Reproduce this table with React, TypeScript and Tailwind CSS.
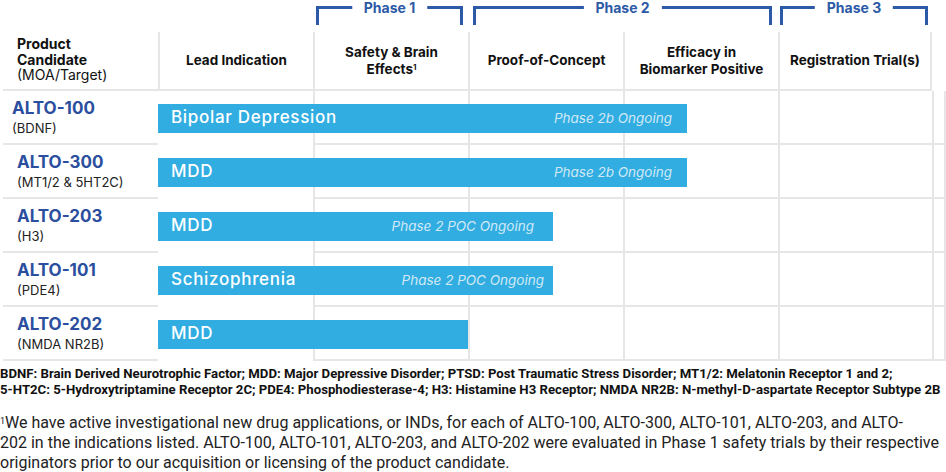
const phases = [
  { label: "Phase 1", cls: "ml-[316px] w-[147px]" },
  { label: "Phase 2", cls: "ml-[10px] w-[299px]" },
  { label: "Phase 3", cls: "ml-[8px] w-[148px]" },
];

const rows = [
  {
    name: "ALTO-100",
    target: "(BDNF)",
    pad: "pl-[9px]",
    bar: "Bipolar Depression",
    status: "Phase 2b Ongoing",
    width: "w-[529px]",
    statusPad: "pr-[15px]",
  },
  {
    name: "ALTO-300",
    target: "(MT1/2 & 5HT2C)",
    pad: "pl-[14px]",
    bar: "MDD",
    status: "Phase 2b Ongoing",
    width: "w-[529px]",
    statusPad: "pr-[15px]",
  },
  {
    name: "ALTO-203",
    target: "(H3)",
    pad: "pl-[14px]",
    bar: "MDD",
    status: "Phase 2 POC Ongoing",
    width: "w-[395px]",
    statusPad: "pr-[19px]",
  },
  {
    name: "ALTO-101",
    target: "(PDE4)",
    pad: "pl-[14px]",
    bar: "Schizophrenia",
    status: "Phase 2 POC Ongoing",
    width: "w-[395px]",
    statusPad: "pr-[9px]",
  },
  {
    name: "ALTO-202",
    target: "(NMDA NR2B)",
    pad: "pl-[14px]",
    bar: "MDD",
    status: "",
    width: "w-[310px]",
    statusPad: "pr-[15px]",
  },
];

const grid =
  "grid grid-cols-[155px_155px_155px_155px_155px_154px] pl-[3px]";

export default function App() {
  return (
    <div className="h-[472px] w-[946px] overflow-hidden bg-white font-['Inter',sans-serif] text-[#111]">
      {/* phase brackets */}
      <div className="flex h-[32px] items-start">
        {phases.map((p) => (
          <div
            key={p.label}
            className={`relative mt-[6px] h-[19px] border-x-[3px] border-t-[3px] border-[#2c5aa6] ${p.cls}`}
          >
            <span className="absolute left-1/2 top-[-9px] -translate-x-1/2 whitespace-nowrap bg-white px-3 text-[14px] font-bold leading-[15px] text-[#2c5aa6]">
              {p.label}
            </span>
          </div>
        ))}
      </div>

      {/* header row */}
      <div className={`${grid} h-[59px]`}>
        <div className="border-b-2 border-[#e6e6e6] pl-[14px] pt-[4px] text-[14px] leading-[15.5px]">
          <p className="font-bold">Product</p>
          <p className="font-bold">Candidate</p>
          <p>(MOA/Target)</p>
        </div>
        {[
          ["Lead Indication"],
          ["Safety & Brain", "Effects"],
          ["Proof-of-Concept"],
          ["Efficacy in", "Biomarker Positive"],
          ["Registration Trial(s)"],
        ].map((lines, i) => (
          <div
            key={lines[0]}
            className={`flex flex-col items-center justify-center border-b-2 border-l-2 border-[#e6e6e6] text-center text-[13.5px] font-bold leading-[17px] ${
              i === 4 ? "border-r-2" : ""
            }`}
          >
            {lines.map((l, j) => (
              <span key={l}>
                {l}
                {i === 1 && j === 1 && (
                  <sup className="text-[8px]">1</sup>
                )}
              </span>
            ))}
          </div>
        ))}
      </div>

      {/* body rows */}
      {rows.map((r) => (
        <div key={r.name} className={`${grid} h-[54px]`}>
          <div
            className={`col-start-1 row-start-1 border-b-2 border-[#e6e6e6] pt-[7px] ${r.pad}`}
          >
            <p className="text-[17px] font-bold leading-[20px] text-[#2b4f9e]">
              {r.name}
            </p>
            <p className="mt-[1px] text-[13px] leading-[18px] text-[#222]">
              {r.target}
            </p>
          </div>
          {[2, 3, 4, 5, 6].map((c) => (
            <div
              key={c}
              className={`row-start-1 border-b-2 border-l-2 border-[#e6e6e6] ${
                c === 6 ? "border-r-2" : ""
              }`}
            />
          ))}
          <div
            className={`relative z-10 col-start-2 row-start-1 flex h-[29px] items-center justify-between self-center bg-[#31ade2] pl-[13px] ${r.width} ${r.statusPad}`}
          >
            <span className="text-[17px] font-medium tracking-[0.7px] text-white">
              {r.bar}
            </span>
            <span className="text-[13.5px] italic text-[#d2e9f5]">
              {r.status}
            </span>
          </div>
        </div>
      ))}

      {/* abbreviations */}
      <div className="mt-[5px] whitespace-nowrap font-['Roboto',sans-serif] text-[13.2px] font-bold leading-[16px] text-[#111]">
        <p>
          BDNF: Brain Derived Neurotrophic Factor; MDD: Major Depressive
          Disorder; PTSD: Post Traumatic Stress Disorder; MT1/2: Melatonin
          Receptor 1 and 2;
        </p>
        <p>
          5-HT2C: 5-Hydroxytriptamine Receptor 2C; PDE4: Phosphodiesterase-4;
          H3: Histamine H3 Receptor; NMDA NR2B: N-methyl-D-aspartate Receptor
          Subtype 2B
        </p>
      </div>

      {/* footnote */}
      <div className="mt-[15px] whitespace-nowrap font-['Roboto',sans-serif] text-[16px] leading-[20px] text-[#222]">
        <p>
          <sup className="text-[9px]">1</sup>We have active investigational
          new drug applications, or INDs, for each of ALTO-100, ALTO-300,
          ALTO-101, ALTO-203, and ALTO-
        </p>
        <p>
          202 in the indications listed. ALTO-100, ALTO-101, ALTO-203, and
          ALTO-202 were evaluated in Phase 1 safety trials by their respective
        </p>
        <p>
          originators prior to our acquisition or licensing of the product
          candidate.
        </p>
      </div>
    </div>
  );
}
